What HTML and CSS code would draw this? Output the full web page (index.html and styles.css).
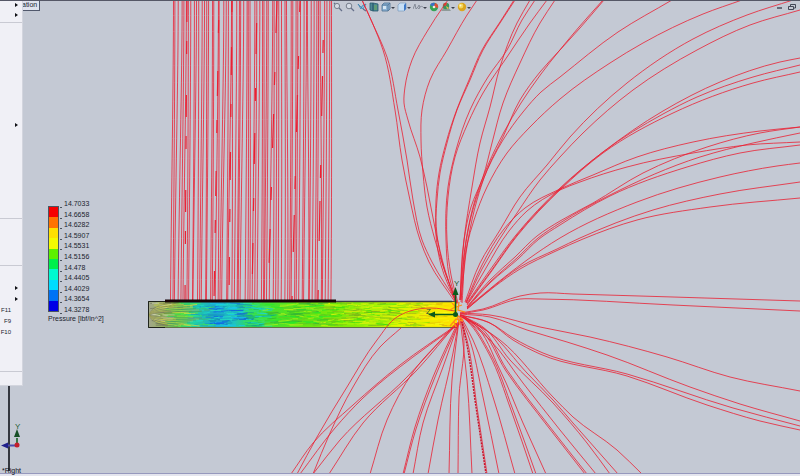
FILE: index.html
```html
<!DOCTYPE html>
<html lang="en">
<head>
<meta charset="utf-8">
<title>Flow simulation</title>
<link rel="stylesheet" href="styles.css">
</head>
<body>
<main class="viewport">
  <header class="bar">
    <div class="toolbar" role="toolbar" aria-label="View">
      <button class="tool" aria-label="Zoom to fit"><svg viewBox="0 0 10 10"><circle cx="4" cy="4" r="2.6" class="lens"/><path d="M6 6l3 3M1 1l1 1" class="handle"/></svg></button>
      <button class="tool" aria-label="Zoom to area"><svg viewBox="0 0 10 10"><circle cx="4" cy="4" r="2.8" class="lens"/><path d="M6 6l3 3" class="handle"/></svg></button>
      <button class="tool" aria-label="Previous view"><svg viewBox="0 0 10 10"><path d="M1 2l3 5 1-3 4-2-3 5z" fill="#8fc1de" stroke="#3c83ad" stroke-width=".8"/><path d="M6 7l3 2" class="handle"/></svg></button>
      <button class="tool" aria-label="Section view"><svg viewBox="0 0 10 10"><path d="M1 1h3v8l-3-1zM4 1l5 1v7H4z" fill="#4c8796" stroke="#285a6c" stroke-width=".8"/><path d="M5 3h3v5H5z" fill="#5f9c77"/></svg></button>
      <button class="tool menu-tool" aria-label="View orientation"><svg viewBox="0 0 10 10"><path d="M1 3l2-2h6v6L7 9H1z" fill="#8db4d6" stroke="#4d6e91" stroke-width=".8"/><path d="M1 3h6v6M7 3l2-2" fill="none" stroke="#4d6e91" stroke-width=".8"/><path d="M2 4h3v3H2z" fill="#d5e6f3"/></svg></button>
      <button class="tool menu-tool" aria-label="Display style"><svg viewBox="0 0 10 10"><path d="M1 3l2-2h6v6L7 9H1z" fill="#c6def5" stroke="#7190b5" stroke-width=".6"/><path d="M7 3l2-2v6L7 9z" fill="#3d78c8"/></svg></button>
      <button class="tool menu-tool" aria-label="Hide or show items"><svg viewBox="0 0 10 10"><path d="M0 7l2-5 1 5 2-2 1-2 1 2-1 2M5 7c2-3 4-3 5-2" fill="none" stroke="#858b98" stroke-width="1"/></svg></button>
      <button class="tool" aria-label="Edit appearance"><svg viewBox="0 0 10 10"><circle cx="5" cy="5" r="4.2" fill="#35a455"/><path d="M5 5L1 3a4.200 4.200 0 0 1 5-2z" fill="#3b72c5"/><path d="M5 5l1-4a4.200 4.200 0 0 1 3 5z" fill="#df4e37"/><circle cx="5" cy="5" r="1.300" fill="#f0e8dc"/></svg></button>
      <button class="tool menu-tool" aria-label="Apply scene"><svg viewBox="0 0 10 10"><path d="M0 9l3-4h4l3 4z" fill="#8f9a98"/><circle cx="5" cy="4" r="3.200" fill="#38955d"/><path d="M5 4l-3-1a3.200 3.200 0 0 1 4-2z" fill="#d94e3c"/><path d="M5 4l3 2-2 1z" fill="#e8c34a"/></svg></button>
      <button class="tool menu-tool" aria-label="View settings"><svg viewBox="0 0 10 10"><circle cx="5" cy="5" r="4.200" fill="#dca61f"/><circle cx="4" cy="4" r="2.400" fill="#f4d75b"/><circle cx="3.500" cy="3.500" r="1" fill="#fff8cf"/></svg></button>
    </div>
    <div class="window-buttons">
      <button class="win" aria-label="Minimize"><svg viewBox="0 0 8 8"><path d="M1 5h5" stroke="#343948" stroke-width="1.300"/></svg></button>
      <button class="win" aria-label="Restore"><svg viewBox="0 0 8 8"><path d="M2.500 3V1.500h5v3.500H6M.5 3.500h5v3h-5z" fill="none" stroke="#343948" stroke-width=".9"/></svg></button>
    </div>
  </header>

  <svg class="scene" viewBox="0 0 800 476" preserveAspectRatio="xMidYMid slice" aria-label="Flow trajectories">
    <defs>
      <linearGradient id="pressure">
        <stop offset="0" stop-color="#a3a58e"/>
        <stop offset=".05" stop-color="#94b35c"/>
        <stop offset=".1" stop-color="#45d64a"/>
        <stop offset=".15" stop-color="#22cfa0"/>
        <stop offset=".22" stop-color="#1aa5d0"/>
        <stop offset=".28" stop-color="#20c4bd"/>
        <stop offset=".34" stop-color="#34dd42"/>
        <stop offset=".5" stop-color="#64e512"/>
        <stop offset=".68" stop-color="#8cec08"/>
        <stop offset=".82" stop-color="#dcf400"/>
        <stop offset="1" stop-color="#ffe400"/>
      </linearGradient>
    </defs>
    <path class="axis-line" d="M9 380V471"/>
    <g id="inlet" class="stream"></g>
    <rect x="148" y="302" width="309" height="25" fill="url(#pressure)"/>
    <g id="texture"></g>
    <path d="M148 327.500H457" stroke="#627344"/>
    <path d="M148 301.500H457" stroke="#4a5046"/>
    <path d="M165 327.500H148.500V301.500H166" fill="none" stroke="#20241c"/>
    <path d="M335 301.500H452" stroke="#3a3e46" stroke-width="1.500"/>
    <path d="M165 301H336" stroke="#180508" stroke-width="3"/>
    <g id="trails" class="stream"></g>
    <g fill="none" stroke="#ff8a1c" stroke-width="1.300">
      <path d="M452 303l4 4 6-2M450 326l6-7 7 2M454 322l2 5M459 302l-1 8 7 2M460 325l-3-10 6 5M450 310l5-3"/>
    </g>
    <g stroke="#0b5a1c" fill="#0b5a1c">
      <path d="M455.500 314V292M455 314.500H433" stroke-width="1.500"/>
      <path d="M455.500 287l3 8h-6zM428 314.500l7-3v6z" stroke="none"/>
      <circle cx="455.500" cy="314.500" r="2.500" stroke="none"/>
    </g>
    <text class="axis-name" x="454" y="286">Y</text>
    <text class="axis-name" x="426" y="314">Z</text>
    <path d="M17 445V438" stroke="#3b7847" stroke-width="2"/>
    <path d="M17 429l3 8h-6z" fill="#174f27"/>
    <path d="M15 445.500H7" stroke="#4d4cae" stroke-width="2"/>
    <path d="M1 445.500l7-3v6z" fill="#20208c"/>
    <circle cx="17" cy="445" r="2.500" fill="#c41f2c"/>
    <text class="axis-name" x="15" y="429">Y</text>
  </svg>

  <span class="tab">ation</span>

  <nav class="menu" aria-label="Menu">
    <div class="group first">
      <button class="item" aria-label="Submenu"><i class="arrow"></i></button>
      <button class="item" aria-label="Submenu"><i class="arrow"></i></button>
    </div>
    <div class="group tall"><button class="item" aria-label="Submenu"><i class="arrow"></i></button></div>
    <div class="group medium"></div>
    <div class="group keys">
      <button class="item" aria-label="Submenu"><i class="arrow"></i></button>
      <button class="item" aria-label="Submenu"><i class="arrow"></i></button>
      <button class="item"><kbd>F11</kbd></button>
      <button class="item"><kbd>F9</kbd></button>
      <button class="item"><kbd>F10</kbd></button>
    </div>
    <div class="group last"></div>
  </nav>

  <section class="legend" aria-label="Pressure scale">
    <div class="scale">
      <div class="bands">
        <i class="b1"></i><i class="b2"></i><i class="b3"></i><i class="b4"></i><i class="b5"></i><i class="b6"></i><i class="b7"></i><i class="b8"></i><i class="b9"></i><i class="b10"></i>
      </div>
      <ol class="values">
        <li>14.7033</li><li>14.6658</li><li>14.6282</li><li>14.5907</li><li>14.5531</li><li>14.5156</li><li>14.478</li><li>14.4405</li><li>14.4029</li><li>14.3654</li><li>14.3278</li>
      </ol>
    </div>
    <p class="unit">Pressure [lbf/in^2]</p>
  </section>

  <footer class="view-name">*Right</footer>
</main>
<script src="scene.js"></script>
</body>
</html>
```
FILE: styles.css
```css
* { box-sizing: border-box; }
body {
  margin: 0;
  font-family: "Liberation Sans", Arial, sans-serif;
  font-size: 7px;
  color: #20232e;
}
button {
  padding: 0;
  border: 0;
  background: none;
  font: inherit;
  color: inherit;
}
.viewport {
  position: relative;
  height: 100vh;
  overflow: hidden;
  background: #c4c9d4;
  border-top: 1px solid #555766;
}
.viewport::after {
  content: "";
  position: absolute;
  inset: auto 0 0;
  height: 2px;
  background: #e4e5ee;
  border-top: 1px solid #9698bd;
}
.scene {
  position: absolute;
  inset: -1px 0 0;
  width: 100%;
  height: 100vh;
  pointer-events: none;
}
.stream { fill: none; stroke: #ea2032; stroke-width: 0.8; }
.stream .heavy { stroke: #c81228; stroke-dasharray: 2 1; stroke-width: 1.4; }
.axis-line { stroke: #34373f; stroke-width: 2; }
.axis-name { font-size: 8px; fill: #1d5a32; }

.bar {
  display: flex;
  justify-content: center;
  padding: 1px 0 0 4px;
}
.toolbar { display: flex; gap: 2px; }
.tool {
  display: flex;
  align-items: center;
  height: 10px;
}
.tool svg { width: 10px; height: 10px; }
.menu-tool::after {
  content: "";
  margin-top: 2px;
  border: 2px solid transparent;
  border-top-color: #3c414d;
  border-bottom: 0;
}
.lens { fill: #d5dbe5; stroke: #777e8c; stroke-width: 1; }
.handle { fill: none; stroke: #66708a; stroke-width: 1.3; }
.window-buttons {
  position: absolute;
  top: 2px;
  right: 4px;
  display: flex;
  gap: 4px;
}
.win { display: flex; }
.win svg { width: 8px; height: 8px; }

.tab {
  position: absolute;
  top: 0;
  left: 22px;
  width: 18px;
  height: 10px;
  line-height: 8px;
  background: #dfe3ee;
  border: solid #51586c;
  border-width: 0 1px 1px 0;
}
.menu {
  position: absolute;
  top: -1px;
  left: 0;
  width: 23px;
  background: #f0f0f6;
  border-right: 1px solid #d3d5de;
  border-bottom: 1px solid #d3d5de;
}
.group + .group { border-top: 1px solid #c9cad3; }
.first { height: 22px; }
.tall { height: 196px; padding-top: 96px; }
.medium { height: 47px; }
.keys { height: 106px; padding-top: 16px; }
.last { height: 14px; }
.item {
  display: flex;
  align-items: center;
  width: 100%;
  height: 11px;
}
.first .item { height: 10px; }
.item kbd {
  width: 11px;
  display: flex;
  justify-content: flex-end;
  font: inherit;
  font-size: 6px;
}
.arrow {
  margin-left: 15px;
  border: 2px solid transparent;
  border-left: 3px solid #101116;
  border-right: 0;
}

.legend {
  position: absolute;
  top: 199px;
  left: 48px;
}
.scale { display: flex; gap: 1px; }
.bands {
  display: flex;
  flex-direction: column;
  width: 11px;
  height: 106px;
  margin-top: 6px;
  border: 1px solid #4b5560;
}
.bands i { flex: 1; }
.b1 { background: #f50000; }
.b2 { background: #ff7300; }
.b3 { background: #ffe000; }
.b4 { background: #f4fa00; }
.b5 { background: #5df000; }
.b6 { background: #00f04c; }
.b7 { background: #00fad0; }
.b8 { background: #00dcff; }
.b9 { background: #0073f5; }
.b10 { background: #0000e6; }
.values {
  display: flex;
  flex-direction: column;
  justify-content: space-between;
  height: 114px;
  margin: 0;
  padding: 0;
  list-style: none;
}
.values li {
  display: flex;
  gap: 2px;
  line-height: 8px;
}
.values li::before {
  content: "";
  width: 2px;
  height: 7px;
  border-bottom: 1px solid #4b5560;
}
.unit { margin: 1px 0 0; line-height: 8px; }
.view-name {
  position: absolute;
  left: 2px;
  bottom: 1px;
  z-index: 1;
  line-height: 8px;
  color: #10121c;
}
```
FILE: scene.js
```js
const NS = "http://www.w3.org/2000/svg";

// Small seeded generator, so that the scene is the same on every load.
let seed = 11;
function rnd() {
  seed = (seed * 16807) % 2147483647;
  return seed / 2147483647;
}

function addPath(parent, d, attrs) {
  const p = document.createElementNS(NS, "path");
  p.setAttribute("d", d);
  for (const k in attrs || {}) p.setAttribute(k, attrs[k]);
  parent.appendChild(p);
}

// Smooth curve through points given as a flat "x y x y" list. Tangents are
// weighted by chord length, so unevenly spaced points give no overshoot.
function smooth(list) {
  const n = list.trim().split(/\s+/).map(Number);
  const p = [];
  for (let i = 0; i < n.length; i += 2) p.push([n[i], n[i + 1]]);
  const last = p.length - 1;
  const len = i => Math.hypot(p[i + 1][0] - p[i][0], p[i + 1][1] - p[i][1]);
  const slope = (i, k) => (p[i + 1][k] - p[i][k]) / len(i);
  const tangent = (i, k) => {
    if (i === 0) return slope(0, k);
    if (i === last) return slope(last - 1, k);
    const a = len(i - 1), b = len(i);
    return (slope(i - 1, k) * b + slope(i, k) * a) / (a + b);
  };
  let d = "M" + p[0].join(" ");
  for (let i = 0; i < last; i++) {
    const h = len(i) / 3, b = p[i], c = p[i + 1];
    d += "C" + [b[0] + tangent(i, 0) * h, b[1] + tangent(i, 1) * h,
      c[0] - tangent(i + 1, 0) * h, c[1] - tangent(i + 1, 1) * h, c[0], c[1]].join(" ");
  }
  return d;
}

const trails = [
  "362 0 372 22 383 50 395 110 402 160 410 200 420 240 429 262 455 302",
  "362 0 371 20 387 57 398 110 407 160 413 200 422 240 432 262 456 301",
  "448 0 443 7 428 30 412 60 405 87 404 103 408 120 420 157 427 187 436 233 445 270 456 303",
  "477 0 467 15 447 50 430 80 422 110 421 140 423 173 427 207 435 240 445 272 457 304",
  "515 0 500 23 483 50 470 80 457 110 447 143 440 173 437 200 436 235 441 265 456 303",
  "514 0 500 22 482 50 469 80 457 109 446 143 439 173 436 200 437 235 443 265 457 303",
  "535 0 522 20 507 50 488 77 470 110 456 150 448 187 446 240 449 275 457 303",
  "547 0 530 23 507 57 483 93 468 123 455 157 448 197 447 240 451 275 458 303",
  "530 0 517 23 500 67 490 107 480 143 472 187 464 240 460 300",
  "555 0 540 23 520 63 503 103 492 143 483 177 471 207 464 240 460 300",
  "604 0 580 28 560 50 540 72 520 100 503 137 487 170 477 200 468 240 461 300",
  "603 0 579 27 559 51 541 74 521 103 504 132 488 165 475 200 466 240 460 300",
  "672 0 618 32 560 77 541 92 523 112 503 140 483 180 471 217 465 250 461 302",
  "742 0 703 14 643 43 610 63 560 99 530 127 507 153 487 187 474 220 467 245 462 303",
  "793 0 747 15 693 39 627 83 570 137 547 165 520 197 500 230 480 263 465 302",
  "800 10 750 25 697 50 633 90 583 133 560 157 540 180 517 213 499 240 482 269 466 303",
  "800 58 780 62 720 82 663 111 603 152 560 188 516 235 490 270 467 303",
  "800 65 753 77 697 97 663 114 603 152 560 189 517 235 491 271 467 304",
  "800 72 753 83 673 113 603 153 561 189 517 236 491 272 467 305",
  "800 127 760 131 693 142 637 157 593 175 560 189 525 208 504 229 482 265 466 302",
  "800 142 747 145 693 153 627 167 580 182 560 190 527 211 509 231 486 268 466 303",
  "800 127 760 133 707 147 643 173 593 203 560 221 537 236 515 257 490 280 467 307",
  "800 133 753 143 700 157 610 195 560 223 538 238 517 258 491 281 467 307",
  "800 145 740 153 687 167 610 196 560 225 539 239 518 259 491 282 467 308",
  "800 163 777 166 720 177 637 202 560 238 527 260 497 283 467 308",
  "800 182 720 194 653 210 580 238 557 249 520 267 493 287 467 309",
  "800 198 710 207 637 220 583 239 556 251 520 269 494 287 467 309",
  "800 301 673 297 573 294 540 293 520 296 483 309 460 313",
  "800 311 673 305 540 299 520 299 483 310 460 314",
  "800 391 730 377 667 357 590 337 540 327 490 315 460 313",
  "800 421 740 404 690 387 607 355 567 342 527 330 490 317 460 314",
  "800 426 733 408 627 374 543 353 513 338 490 323 460 315",
  "800 430 760 421 707 405 627 376 540 354 513 340 488 322 460 315",
  "642 474 617 450 573 417 553 397 500 340 463 316",
  "618 474 573 423 553 400 527 373 490 333 463 316",
  "610 474 587 443 553 403 510 360 483 327 463 316",
  "596 474 560 430 523 383 490 340 463 317",
  "587 474 550 427 507 370 480 327 462 317",
  "585 474 549 428 506 371 479 328 462 317",
  "546 474 523 423 500 370 473 323 461 315",
  "536 474 513 410 490 353 467 320 460 315",
  "533 474 511 410 489 354 467 321 460 315",
  "515 474 493 397 473 340 460 315",
  "499 474 483 397 468 335 460 316",
  "487 474 477 407 467 340 460 316",
  "472 474 467 380 460 318",
  "458 474 459 397 463 330 460 316",
  "449 474 452 380 459 320",
  "428 474 438 420 453 353 459 320",
  "413 474 423 423 443 367 459 322",
  "403 474 415 427 433 377 458 322",
  "404 474 416 429 435 377 459 322",
  "370 474 387 420 413 372 457 324",
  "329 474 363 423 417 370 457 323",
  "313 474 340 440 407 377 456 323",
  "300 474 335 428 363 398 413 357 455 327",
  "291 474 313 443 353 405 400 365 455 326",
  "297 474 317 437 347 387 377 340 397 317 410 311 430 308 455 311",
  "313 474 330 433 353 387 380 347 401 328"
];
const trailGroup = document.getElementById("trails");
trails.forEach(t => addPath(trailGroup, smooth(t)));
addPath(trailGroup, smooth("486 474 476 407 466 340 462 322"), { class: "heavy" });

// Near-vertical trajectories that enter the top opening.
const inlet = document.getElementById("inlet");
for (let i = 0; i < 62; i++) {
  const edge = i === 0 || i === 61;
  const top = 173.5 + i * 2.59 + (edge ? 0 : rnd() * 2.4 - 1.2);
  const bottom = 170.5 + i * 2.63 + (edge ? 0 : rnd() * 3 - 1.5);
  addPath(inlet, `M${top} 0C${top} 80 ${bottom + 1} 190 ${bottom} 300`);
}
[[187, 185], [219, 214], [232, 229], [257, 252], [277, 268], [300, 292], [324, 318]].forEach(
  ([a, b], i) => addPath(inlet, `M${a} 0L${b} 300`, {
    "stroke-dasharray": `${22 + i * 3} ${19 + i * 5} 13 ${41 - i * 3}`,
    "stroke-dashoffset": i * 29,
    "stroke-width": 1.2
  }));

// Short streaks inside the duct, coloured by the local pressure.
const texture = document.getElementById("texture");
const zones = [
  [165, ["#c9cb43", "#777b62", "#d4d7b4", "#6d8c38"]],
  [185, ["#62e63b", "#c4de42", "#24c76a", "#8dac48"]],
  [205, ["#1dd9c5", "#3ce75b", "#1598c4", "#39b985"]],
  [240, ["#1266df", "#18c5ee", "#1491b4", "#25dfc1"]],
  [262, ["#1cd3cf", "#3be263", "#14a78a"]],
  [320, ["#28e828", "#a7f018", "#32b635", "#65c822"]],
  [390, ["#a4f507", "#40dd11", "#7ab41a", "#ddf20a"]],
  [418, ["#e8f900", "#85e309", "#aeba15"]],
  [458, ["#fff100", "#f8ff17", "#e1bb09", "#ffd500"]]
];
for (let i = 0; i < 620; i++) {
  const x = 150 + rnd() * 294;
  const y = 303 + rnd() * 23;
  const len = 5 + rnd() * 12;
  const colors = zones.find(z => x < z[0])[1];
  const tilt = x < 185 ? (y < 314 ? -2 : 2) * rnd() : (rnd() - 0.5) * 3;
  const end = Math.min(326, Math.max(303, y + tilt));
  addPath(texture, `M${x} ${y}Q${x + len / 2} ${y} ${Math.min(456, x + len)} ${end}`, {
    fill: "none", stroke: colors[Math.floor(rnd() * colors.length)], "stroke-width": 0.8
  });
}
for (let i = 0; i < 9; i++) {
  addPath(texture, `M${178 + i * 3} ${303 + i}C${140 - i} ${304 + i} ${140 - i} ${326 - i} ${178 + i * 3} ${326 - i}`, {
    fill: "none", stroke: i % 2 ? "#d1d14b" : "#6f725c", "stroke-width": 0.7, opacity: 0.7
  });
}
```
